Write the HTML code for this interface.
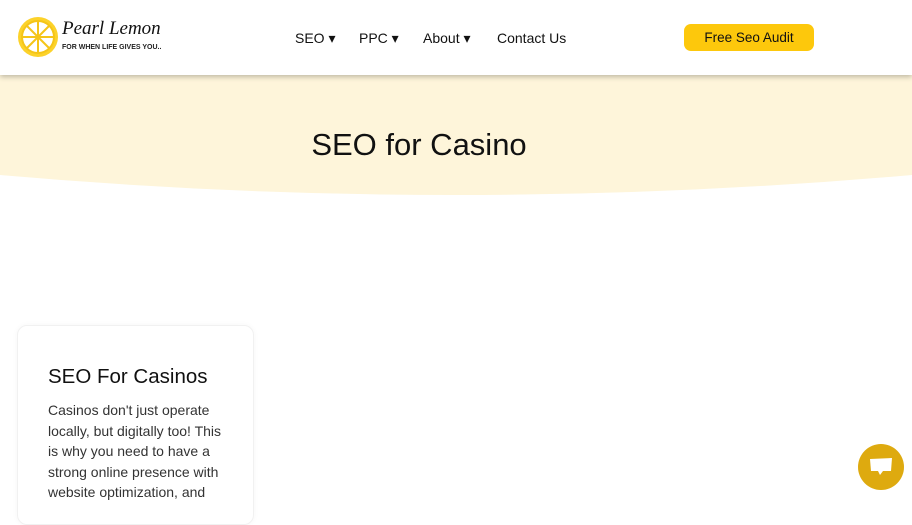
<!DOCTYPE html>
<html><head><meta charset="utf-8"><style>
*{margin:0;padding:0;box-sizing:border-box}
body{width:912px;height:504px;overflow:hidden;background:#fff;font-family:"Liberation Sans",sans-serif;position:relative}
.hdr{position:absolute;top:0;left:0;width:912px;height:75px;background:#fff;box-shadow:0 2px 5px rgba(0,0,0,.25);z-index:2}
.nav{position:absolute;top:30px;font-size:14px;color:#111}
.nav span{position:absolute;white-space:nowrap}
.btn{position:absolute;left:684px;top:24px;width:130px;height:27px;background:#fdc80c;border-radius:7px;font-size:13.5px;text-align:center;line-height:27px;color:#111}
.hero{position:absolute;top:75px;left:0;width:912px;height:120px;background:#fef5da}
.h1{position:absolute;top:127px;left:0;width:838px;text-align:center;font-size:31px;color:#111}
.card{position:absolute;left:17px;top:325px;width:237px;height:200px;border:1px solid #f1f1f1;border-radius:10px;box-shadow:0 0 6px rgba(0,0,0,.04)}
.card h2{position:absolute;left:30px;top:39px;font-weight:normal;font-size:20.5px;color:#111}
.card p{position:absolute;left:30px;top:74px;width:180px;font-size:14px;line-height:20.5px;color:#333}
.chat{position:absolute;left:858px;top:444px;width:46px;height:46px;border-radius:50%;background:#deaa0f}
</style></head><body>
<div class="hero"></div>
<svg style="position:absolute;top:170px;left:0" width="912" height="30"><path d="M0 5 Q456 45 912 5 L912 30 L0 30Z" fill="#fff"/></svg>
<div class="h1">SEO for Casino</div>
<div class="hdr">
<svg style="position:absolute;left:17px;top:16px" width="42" height="42" viewBox="0 0 42 42"><circle cx="21" cy="21" r="20" fill="#fcd22a"/><circle cx="21" cy="21" r="16" fill="#fff" stroke="#f5c518" stroke-width="2"/><g stroke="#f5c518" stroke-width="2"><line x1="21" y1="5" x2="21" y2="37"/><line x1="5" y1="21" x2="37" y2="21"/><line x1="10" y1="10" x2="32" y2="32"/><line x1="32" y1="10" x2="10" y2="32"/></g></svg>
<div style="position:absolute;left:62px;top:18px;font-family:'Liberation Serif',serif;font-style:italic;font-size:19px;color:#111">Pearl Lemon</div>
<div style="position:absolute;left:62px;top:44px;font-size:7px;font-weight:bold;color:#222">FOR WHEN LIFE GIVES YOU..</div>
<div class="nav"><span style="left:295px">SEO ▾</span><span style="left:359px">PPC ▾</span><span style="left:423px">About ▾</span><span style="left:497px">Contact Us</span></div>
<div class="btn">Free Seo Audit</div>
</div>
<div class="card"><h2>SEO For Casinos</h2><p>Casinos don't just operate locally, but digitally too! This is why you need to have a strong online presence with website optimization, and</p></div>
<div class="chat"><svg style="position:absolute;left:11px;top:13px" width="24" height="22" viewBox="0 0 24 22"><path d="M1 2 L23 1 L22 14 L14 14 L11 18 L9 14 L2 14Z" fill="#fff"/></svg></div>
</body></html>
